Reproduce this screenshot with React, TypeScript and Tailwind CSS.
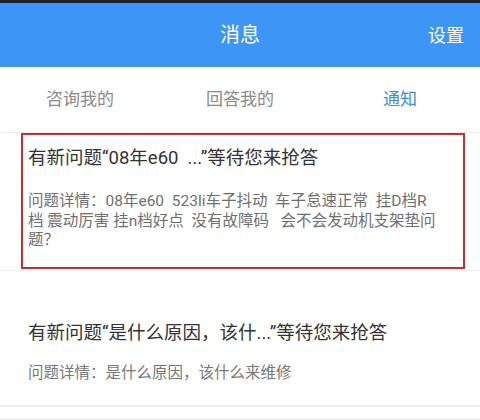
import React from "react";

const font = { fontFamily: 'Roboto, "Noto Sans CJK SC", sans-serif' };

export default function App() {
  return (
    <div className="w-[480px] h-[420px] bg-white overflow-hidden flex flex-col" style={font}>
      <div className="h-[3px] bg-[#222]" />
      <div className="h-[64px] bg-[#3d95f5] relative flex items-center justify-center">
        <span className="text-white text-[20px]">消息</span>
        <span className="absolute right-[16px] text-white text-[18px]">设置</span>
      </div>
      <div className="h-[65px] grid grid-cols-3 items-center text-[17px]">
        <div className="text-center text-[#8a8a8a]">咨询我的</div>
        <div className="text-center text-[#8a8a8a]">回答我的</div>
        <div className="text-center text-[#3a8ce0]">通知</div>
      </div>
      <div className="h-px bg-[#ececec]" />
      <div className="h-[137px] flex flex-col">
        <div className="ml-[21px] w-[444px] h-[136px] border-2 border-[#cf2a30] pl-[5px] pt-[11px]">
          <div className="text-[18.5px] leading-[25px] text-[#333] whitespace-pre">有新问题“08年e60  ...”等待您来抢答</div>
          <div className="mt-[21px] text-[15.5px] leading-[19.5px] text-[#6f6f6f] whitespace-pre">
            <div>问题详情：08年e60  523li车子抖动  车子怠速正常  挂D档R</div>
            <div>档 震动厉害 挂n档好点  没有故障码   会不会发动机支架垫问</div>
            <div>题？</div>
          </div>
        </div>
      </div>
      <div className="h-px bg-[#eef2f4]" />
      <div className="h-[134px] px-[28px] pt-[50px]">
        <div className="text-[18.5px] leading-[25px] text-[#333] whitespace-pre">有新问题“是什么原因，该什...”等待您来抢答</div>
        <div className="mt-[17px] text-[15.5px] leading-[21px] text-[#777]">问题详情：是什么原因，该什么来维修</div>
      </div>
      <div className="h-[2px] bg-[#ececec]" />
      <div className="h-[11px] bg-white" />
      <div className="flex-1 bg-[#f0f0f0]" />
    </div>
  );
}
